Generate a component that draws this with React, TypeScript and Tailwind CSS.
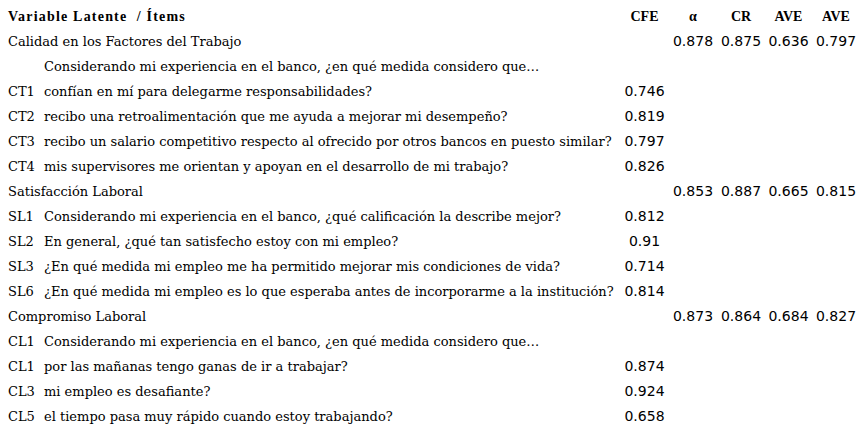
import React from "react";

type Row = {
  code?: string;
  text: string;
  group?: boolean;
  cfe?: string;
  stats?: [string, string, string, string];
};

const rows: Row[] = [
  { text: "Calidad en los Factores del Trabajo", group: true, stats: ["0.878", "0.875", "0.636", "0.797"] },
  { text: "Considerando mi experiencia en el banco, ¿en qué medida considero que…" },
  { code: "CT1", text: "confían en mí para delegarme responsabilidades?", cfe: "0.746" },
  { code: "CT2", text: "recibo una retroalimentación que me ayuda a mejorar mi desempeño?", cfe: "0.819" },
  { code: "CT3", text: "recibo un salario competitivo respecto al ofrecido por otros bancos en puesto similar?", cfe: "0.797" },
  { code: "CT4", text: "mis supervisores me orientan y apoyan en el desarrollo de mi trabajo?", cfe: "0.826" },
  { text: "Satisfacción Laboral", group: true, stats: ["0.853", "0.887", "0.665", "0.815"] },
  { code: "SL1", text: "Considerando mi experiencia en el banco, ¿qué calificación la describe mejor?", cfe: "0.812" },
  { code: "SL2", text: "En general, ¿qué tan satisfecho estoy con mi empleo?", cfe: "0.91" },
  { code: "SL3", text: "¿En qué medida mi empleo me ha permitido mejorar mis condiciones de vida?", cfe: "0.714" },
  { code: "SL6", text: "¿En qué medida mi empleo es lo que esperaba antes de incorporarme a la institución?", cfe: "0.814" },
  { text: "Compromiso Laboral", group: true, stats: ["0.873", "0.864", "0.684", "0.827"] },
  { code: "CL1", text: "Considerando mi experiencia en el banco, ¿en qué medida considero que…" },
  { code: "CL1", text: "por las mañanas tengo ganas de ir a trabajar?", cfe: "0.874" },
  { code: "CL3", text: "mi empleo es desafiante?", cfe: "0.924" },
  { code: "CL5", text: "el tiempo pasa muy rápido cuando estoy trabajando?", cfe: "0.658" },
];

const serif = "font-['DejaVu_Serif',serif] text-[13px]";
const num = "font-['DejaVu_Sans',sans-serif] text-[14px]";
const grid = "grid grid-cols-[36px_576px_49px_48px_48px_47px_48px] h-[25px] items-center";

export default function App() {
  return (
    <div className="w-[867px] h-[433px] bg-white text-black pt-[4px] pl-[8px] overflow-hidden">
      <div className={`${grid} font-['Liberation_Serif',serif] font-bold text-[14px]`}>
        <div className="col-span-2 whitespace-pre tracking-[1.2px]">Variable Latente  / Ítems</div>
        <div className="text-center">CFE</div>
        <div className="text-center">α</div>
        <div className="text-center">CR</div>
        <div className="text-center">AVE</div>
        <div className="text-center">AVE</div>
      </div>
      {rows.map((r, i) => (
        <div key={i} className={grid}>
          {r.group ? (
            <div className={`col-span-2 ${serif} whitespace-nowrap`}>{r.text}</div>
          ) : (
            <>
              <div className={serif}>{r.code ?? ""}</div>
              <div className={`${serif} whitespace-nowrap`}>{r.text}</div>
            </>
          )}
          <div className={`text-center ${num}`}>{r.cfe ?? ""}</div>
          {r.stats ? (
            r.stats.map((s, j) => (
              <div key={j} className={`text-center ${num}`}>{s}</div>
            ))
          ) : (
            <>
              <div />
              <div />
              <div />
              <div />
            </>
          )}
        </div>
      ))}
    </div>
  );
}
